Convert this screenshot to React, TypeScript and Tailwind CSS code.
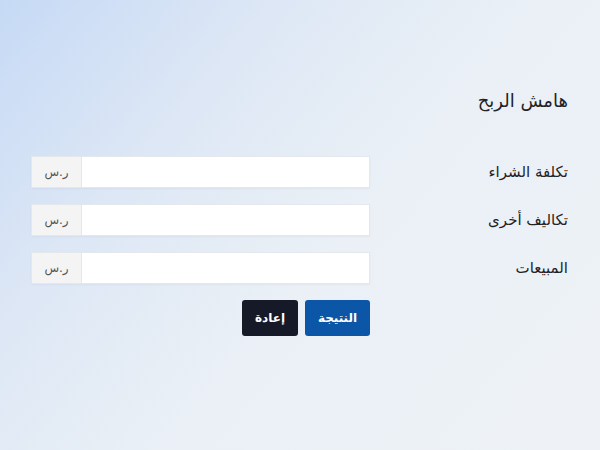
export default function App() {
  const fields = ['تكلفة الشراء', 'تكاليف أخرى', 'المبيعات'];

  return (
    <div
      dir="rtl"
      className="w-[600px] h-[450px] overflow-hidden bg-[linear-gradient(130deg,#c6daf5_0%,#dde7f5_28%,#eaf0f6_55%,#eef2f6_100%)] pr-[32px] pl-[31px] pt-[87px] text-[#1f2328]"
      style={{ fontFamily: '"DejaVu Sans", "Noto Sans", sans-serif' }}
    >
      <h1 className="text-[18px] leading-[28px] font-normal">هامش الربح</h1>

      <div className="mt-[41px] flex flex-col gap-[16px]">
        {fields.map((label) => (
          <div key={label} className="flex items-center">
            <label className="w-[198px] shrink-0 text-[15px] leading-[24px]">{label}</label>
            <div className="flex flex-1 h-[32px] shadow-[0_1px_2px_rgba(0,0,0,0.04)]">
              <input
                type="text"
                className="flex-1 min-w-0 bg-white border border-[#e4e7eb] outline-none px-3"
              />
              <span className="w-[50px] shrink-0 flex items-center justify-center bg-[#f4f4f5] border border-r-0 border-[#e4e7eb] text-[12px] text-[#555]">
                ر.س
              </span>
            </div>
          </div>
        ))}
      </div>

      <div className="mt-[16px] flex gap-[7px] pr-[198px]">
        <button className="w-[65px] h-[36px] rounded-[3px] bg-[#0b56a6] text-white text-[12px] font-bold">
          النتيجة
        </button>
        <button className="w-[56px] h-[36px] rounded-[3px] bg-[#161a28] text-white text-[12px] font-bold">
          إعادة
        </button>
      </div>
    </div>
  );
}
